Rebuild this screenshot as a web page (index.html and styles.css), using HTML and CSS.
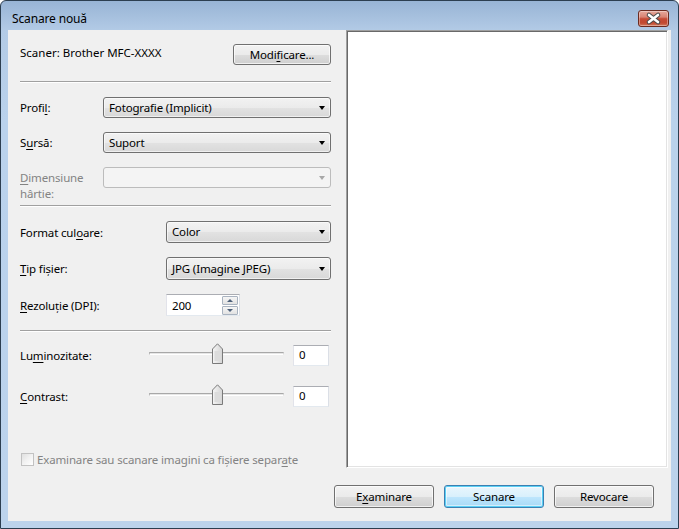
FILE: index.html
```html
<!DOCTYPE html>
<html lang="ro">
<head>
    <meta charset="UTF-8">
    <title>Scanare nouă</title>
    <link rel="stylesheet" href="styles.css">
</head>
<body>
    <div class="window">
        <div class="title-bar">
            <span class="title">Scanare nouă</span>
            <button class="close-btn" title="Închidere">
                <svg width="31" height="17" viewBox="0 0 31 17">
                    <path d="M11 5 L20 12 M20 5 L11 12" stroke="#4a4a4a" stroke-width="4.6" stroke-linecap="round"/>
                    <path d="M11 5 L20 12 M20 5 L11 12" stroke="#ffffff" stroke-width="2.6" stroke-linecap="round"/>
                </svg>
            </button>
        </div>

        <div class="client">
            <div class="main">
                <!-- Scan settings -->
                <div class="settings">
                    <div class="scanner-row">
                        <span class="scanner-name">Scaner: Brother MFC-XXXX</span>
                        <button class="btn btn-modify">Modi<u>f</u>icare...</button>
                    </div>

                    <div class="sep sep-1"></div>

                    <div class="group group-source">
                        <label>Profi<u>l</u>:</label>
                        <div class="combo"><span>Fotografie (Implicit)</span><i class="arrow"></i></div>

                        <label>S<u>u</u>rsă:</label>
                        <div class="combo"><span>Suport</span><i class="arrow"></i></div>

                        <label class="disabled two-lines">
                            <span class="line"><u>D</u>imensiune</span>
                            <span class="line">hârtie:</span>
                        </label>
                        <div class="combo combo-disabled"><span></span><i class="arrow"></i></div>
                    </div>

                    <div class="sep sep-2"></div>

                    <div class="group group-format">
                        <label>Format cul<u>o</u>are:</label>
                        <div class="combo"><span>Color</span><i class="arrow"></i></div>

                        <label><u>T</u>ip fișier:</label>
                        <div class="combo"><span>JPG (Imagine JPEG)</span><i class="arrow"></i></div>

                        <label><u>R</u>ezoluție (DPI):</label>
                        <div class="spin">
                            <span class="spin-value">200</span>
                            <div class="spin-buttons">
                                <span class="spin-btn"><i class="spin-up"></i></span>
                                <span class="spin-btn"><i class="spin-down"></i></span>
                            </div>
                        </div>
                    </div>

                    <div class="sep sep-3"></div>

                    <div class="group group-adjust">
                        <label>Lu<u>m</u>inozitate:</label>
                        <div class="slider">
                            <div class="track"></div>
                            <svg class="thumb" width="11" height="21" viewBox="0 0 11 21">
                                <defs>
                                    <linearGradient id="thumbFill" x1="0" y1="0" x2="1" y2="0">
                                        <stop offset="0" stop-color="#f6f6f6"/>
                                        <stop offset="1" stop-color="#d4d4d4"/>
                                    </linearGradient>
                                </defs>
                                <path d="M0.5 20.5 V6 L5.5 0.8 L10.5 6 V20.5 Z" fill="url(#thumbFill)" stroke="#7a7a7a"/>
                                <rect x="2.5" y="8" width="6" height="10" fill="#dcdcdc"/>
                            </svg>
                        </div>
                        <div class="textbox">0</div>

                        <label><u>C</u>ontrast:</label>
                        <div class="slider">
                            <div class="track"></div>
                            <svg class="thumb" width="11" height="21" viewBox="0 0 11 21">
                                <path d="M0.5 20.5 V6 L5.5 0.8 L10.5 6 V20.5 Z" fill="url(#thumbFill)" stroke="#7a7a7a"/>
                                <rect x="2.5" y="8" width="6" height="10" fill="#dcdcdc"/>
                            </svg>
                        </div>
                        <div class="textbox">0</div>
                    </div>

                    <div class="check-row">
                        <span class="checkbox"></span>
                        <span class="disabled">Examinare sau scanare imagini ca fișiere separ<u>a</u>te</span>
                    </div>
                </div>

                <!-- Preview area -->
                <div class="preview"></div>
            </div>

            <div class="actions">
                <button class="btn">E<u>x</u>aminare</button>
                <button class="btn btn-default">Scanare</button>
                <button class="btn">Revocare</button>
            </div>
        </div>
    </div>
</body>
</html>
```

FILE: styles.css
```css
/* General Reset */
* {
    margin: 0;
    padding: 0;
    box-sizing: border-box;
}

body {
    font-family: "Noto Sans", "Open Sans", sans-serif;
    font-size: 11.5px;
    letter-spacing: -0.15px;
    color: #000000;
    background-color: #ffffff;
}

u {
    text-decoration-thickness: 1px;
    text-underline-offset: 2px;
}

/* Window frame */
.window {
    width: 679px;
    height: 529px;
    border: 1px solid #2c3e50;
    border-radius: 6px 6px 0 0;
    padding: 0 7px 7px 7px;
    background: linear-gradient(to bottom, #98b4d5 0, #b3cbe6 30px, #bad2ec 120px, #bcd3ec 100%);
    display: flex;
    flex-direction: column;
}

.title-bar {
    height: 29px;
    display: flex;
    justify-content: space-between;
    align-items: flex-start;
}

.title {
    padding: 10px 0 0 4px;
    line-height: 16px;
    font-size: 12px;
    color: #000000;
}

.close-btn {
    width: 31px;
    height: 17px;
    margin-top: 9px;
    margin-right: 2px;
    border: 1px solid #6b2b20;
    border-radius: 3px;
    background: linear-gradient(to bottom, #e6a89b 0%, #d98474 40%, #c54a35 52%, #c24a31 80%, #d37a5e 100%);
    box-shadow: inset 0 0 0 1px rgba(255, 255, 255, 0.35);
    display: flex;
    align-items: center;
    justify-content: center;
}

.close-btn svg {
    display: block;
    margin: -1px;
}

/* Client area */
.client {
    flex: 1;
    background-color: #f0f0f0;
    display: flex;
    flex-direction: column;
}

.main {
    display: flex;
    height: 439px;
}

.settings {
    width: 338px;
    padding: 0 15px 0 12px;
}

.scanner-row {
    margin-top: 14px;
    height: 21px;
    display: flex;
    justify-content: space-between;
}

.scanner-name {
    line-height: 16px;
    margin-top: 1px;
    letter-spacing: 0;
}

.sep {
    border-top: 1px solid #a0a0a0;
    border-bottom: 1px solid #ffffff;
}

.sep-1 { margin-top: 16px; }
.sep-2 { margin-top: 17px; }
.sep-3 { margin-top: 14px; }

/* Form groups */
.group {
    display: grid;
    align-items: center;
}

.group label {
    line-height: 15px;
}

.group-source {
    margin-top: 14px;
    grid-template-columns: 83px 228px;
    grid-template-rows: 21px 21px 21px;
    row-gap: 14px;
}

.group-format {
    margin-top: 14px;
    grid-template-columns: 146px 165px;
    grid-template-rows: 22px 23px 22px;
    row-gap: 14px;
}

.group-adjust {
    margin-top: 13px;
    grid-template-columns: 120px 135px 36px;
    grid-template-rows: 21px 21px;
    column-gap: 9px;
    row-gap: 20px;
}

.group .two-lines {
    align-self: start;
    padding-top: 3px;
}

.two-lines .line {
    display: block;
    line-height: 16px;
}

.disabled {
    color: #838383;
}

/* Combo boxes */
.combo {
    height: 100%;
    border: 1px solid #707070;
    border-radius: 3px;
    background: linear-gradient(to bottom, #f2f2f2 0%, #ebebeb 50%, #e2e2e2 52%, #d8d8d8 100%);
    box-shadow: inset 0 0 0 1px rgba(255, 255, 255, 0.6);
    display: flex;
    align-items: center;
    padding: 0 5px 1px 5px;
}

.combo .arrow {
    margin-left: auto;
    width: 0;
    height: 0;
    border-left: 3.5px solid transparent;
    border-right: 3.5px solid transparent;
    border-top: 4px solid #000000;
    margin-top: 1px;
}

.combo-disabled {
    border-color: #bcbcbc;
    background: #f4f4f4;
    box-shadow: none;
}

.combo-disabled .arrow {
    border-top-color: #a8a8a8;
}

/* Spin box */
.spin {
    width: 74px;
    height: 100%;
    background-color: #ffffff;
    border: 1px solid;
    border-color: #abadb3 #dbdfe6 #e3e9ef #e2e3ea;
    display: flex;
    align-items: center;
    padding-left: 5px;
}

.spin-value {
    flex: 1;
}

.spin-buttons {
    display: flex;
    flex-direction: column;
    align-self: stretch;
    justify-content: center;
    gap: 1px;
    padding: 0 1px;
}

.spin-btn {
    width: 16px;
    height: 9px;
    border: 1px solid #a9b3c0;
    border-radius: 1px;
    background: linear-gradient(to bottom, #f6f6f6, #e2e2e2);
    display: flex;
    align-items: center;
    justify-content: center;
}

.spin-up, .spin-down {
    width: 0;
    height: 0;
    border-left: 3px solid transparent;
    border-right: 3px solid transparent;
}

.spin-up { border-bottom: 3px solid #4c607a; }
.spin-down { border-top: 3px solid #4c607a; }

/* Sliders */
.slider {
    position: relative;
    height: 100%;
}

.track {
    position: absolute;
    left: 0;
    right: 0;
    top: 7px;
    height: 3px;
    background-color: #e6e6e6;
    border-top: 1px solid #a8a8a8;
    border-left: 1px solid #b8b8b8;
    border-right: 1px solid #d8d8d8;
    border-bottom: 1px solid #ffffff;
}

.thumb {
    position: absolute;
    left: 63px;
    top: -2px;
}

.textbox {
    height: 100%;
    background-color: #ffffff;
    border: 1px solid;
    border-color: #abadb3 #dbdfe6 #e3e9ef #e2e3ea;
    padding-left: 5px;
    line-height: 18px;
}

/* Checkbox */
.check-row {
    margin-top: 45px;
    display: flex;
    align-items: center;
    gap: 3px;
    margin-left: 1px;
}

.checkbox {
    width: 13px;
    height: 13px;
    border: 1px solid #c2c2c2;
    background: linear-gradient(135deg, #e0e0e0 0%, #f2f2f2 50%, #ffffff 100%);
}

/* Preview */
.preview {
    width: 322px;
    height: 438px;
    background-color: #ffffff;
    border: 1px solid;
    border-color: #a0a0a0 #ffffff #ffffff #a0a0a0;
    box-shadow: inset 1px 1px 0 #696969, inset -1px -1px 0 #e3e3e3;
}

/* Buttons */
.btn {
    font-family: inherit;
    font-size: 11.5px;
    letter-spacing: -0.15px;
    color: #000000;
    border: 1px solid #707070;
    border-radius: 3px;
    background: linear-gradient(to bottom, #f2f2f2 0%, #ebebeb 50%, #dddddd 52%, #cfcfcf 100%);
    box-shadow: inset 0 0 0 1px rgba(255, 255, 255, 0.7);
    width: 100px;
    height: 23px;
}

.btn-modify {
    width: 98px;
    height: 21px;
}

.btn-default {
    border-color: #3c7fb1;
    background: linear-gradient(to bottom, #eaf6fd 0%, #d9f0fc 50%, #bee6fd 52%, #a7d9f5 100%);
    box-shadow: inset 0 0 0 1px #5ad0f5, inset 0 0 0 2px rgba(255, 255, 255, 0.5);
}

.actions {
    margin-top: 16px;
    padding-right: 17px;
    display: flex;
    justify-content: flex-end;
    gap: 10px;
}
```
